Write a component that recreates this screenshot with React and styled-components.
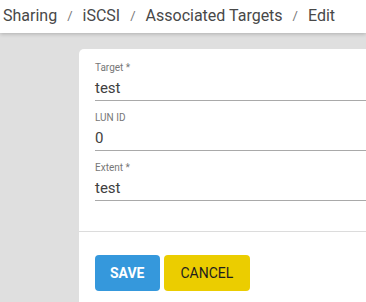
import React from "react";
import styled, { createGlobalStyle } from "styled-components";

const Global = createGlobalStyle`
  html, body { margin: 0; padding: 0; }
  body {
    font-family: Roboto, "Liberation Sans", sans-serif;
    background: #dfdfdf;
    width: 366px;
    height: 302px;
    overflow: hidden;
  }
`;

const Page = styled.div`
  display: flex;
  flex-direction: column;
  height: 302px;
  overflow: hidden;
`;

const TopBar = styled.header`
  height: 33px;
  background: #ffffff;
  box-shadow: 0 1px 4px rgba(0, 0, 0, 0.22);
  display: flex;
  align-items: center;
  padding-left: 3px;
  position: relative;
  z-index: 1;
  flex-shrink: 0;
`;

const Crumbs = styled.nav`
  display: flex;
  align-items: center;
  font-size: 16px;
  color: #444;
  white-space: nowrap;
  margin-top: -2px;
`;

const Crumb = styled.span`
  color: #484848;
`;

const Sep = styled.span`
  color: #777;
  font-size: 13px;
  margin: 0 10px;
`;

const Main = styled.main`
  flex: 1;
  padding: 16px 0 0 79px;
  display: flex;
`;

const Card = styled.section`
  background: #fff;
  border-radius: 5px 0 0 0;
  width: 400px;
  flex-shrink: 0;
  display: flex;
  flex-direction: column;
`;

const FormBody = styled.div`
  padding: 13px 0 30px 16px;
  display: flex;
  flex-direction: column;
  gap: 11px;
`;

const Field = styled.div`
  display: flex;
  flex-direction: column;
`;

const Label = styled.label`
  font-size: 10px;
  line-height: 12px;
  height: 12px;
  color: #777;
  margin-bottom: 4px;
`;

const Value = styled.div`
  font-size: 15px;
  line-height: 18px;
  padding: 1px 0 3px;
  color: #404040;
  border-bottom: 1px solid #a9a9a9;
`;

const Divider = styled.hr`
  margin: 0;
  border: none;
  border-top: 1px solid #dcdcdc;
`;

const Actions = styled.div`
  display: flex;
  gap: 4px;
  padding: 23px 0 0 16px;
`;

const Button = styled.button`
  height: 36px;
  border: none;
  border-radius: 4px;
  padding: 0 ${(p) => (p.$primary ? "15px" : "17px")};
  font-family: Roboto, "Liberation Sans", sans-serif;
  font-size: 14px;
  font-weight: ${(p) => (p.$primary ? 700 : 400)};
  color: ${(p) => (p.$primary ? "#ffffff" : "#1e1e1e")};
  background: ${(p) => (p.$primary ? "#3598dc" : "#ebcd00")};
  text-transform: uppercase;
  cursor: pointer;
`;

const crumbs = ["Sharing", "iSCSI", "Associated Targets", "Edit"];
const fields = [
  { label: "Target *", value: "test" },
  { label: "LUN ID", value: "0" },
  { label: "Extent *", value: "test" },
];

export default function App() {
  return (
    <>
      <Global />
      <Page>
        <TopBar>
          <Crumbs>
            {crumbs.map((c, i) => (
              <React.Fragment key={c}>
                {i > 0 && <Sep>/</Sep>}
                <Crumb>{c}</Crumb>
              </React.Fragment>
            ))}
          </Crumbs>
        </TopBar>
        <Main>
          <Card>
            <FormBody>
              {fields.map((f) => (
                <Field key={f.label}>
                  <Label>{f.label}</Label>
                  <Value>{f.value}</Value>
                </Field>
              ))}
            </FormBody>
            <Divider />
            <Actions>
              <Button $primary>Save</Button>
              <Button>Cancel</Button>
            </Actions>
          </Card>
        </Main>
      </Page>
    </>
  );
}
